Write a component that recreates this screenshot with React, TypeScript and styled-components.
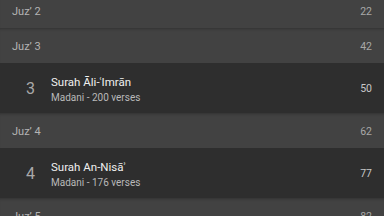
import React from "react";
import styled, { createGlobalStyle } from "styled-components";

const Global = createGlobalStyle`
  html, body { margin: 0; padding: 0; background: #2e2e2e; overflow: hidden; }
  body { font-family: Roboto, "Noto Sans", "Liberation Sans", sans-serif; }
`;

const List = styled.div`
  display: flex;
  flex-direction: column;
  margin-top: -7px;
  width: 384px;
`;

const JuzHeader = styled.div`
  display: flex;
  align-items: center;
  justify-content: space-between;
  height: 35px;
  padding: 1px 12px 0 12px;
  box-sizing: border-box;
  background: #424242;
  box-shadow: inset 0 3px 3px -2px rgba(0, 0, 0, 0.25);
`;

const JuzLabel = styled.span`
  font-size: 11px;
  color: #b4b4b4;
`;

const Page = styled.span<{ $bright?: boolean }>`
  font-size: 10.5px;
  color: ${(p) => (p.$bright ? "#c8c8c8" : "#a8a8a8")};
`;

const SurahRow = styled.div`
  display: flex;
  align-items: center;
  height: 50px;
  padding: 0 12px 0 0;
  box-sizing: border-box;
  background: #2e2e2e;
`;

const Num = styled.div`
  width: 51px;
  padding-left: 26px;
  box-sizing: border-box;
  font-size: 16px;
  color: #a9a9a9;
`;

const Info = styled.div`
  flex: 1;
  display: flex;
  flex-direction: column;
  gap: 3px;
`;

const Name = styled.span`
  font-size: 11.5px;
  color: #f0f0f0;
`;

const Sub = styled.span`
  font-size: 10px;
  color: #b9b9b9;
`;

type Item =
  | { kind: "juz"; label: string; page: number }
  | { kind: "surah"; n: number; name: string; sub: string; page: number };

const items: Item[] = [
  { kind: "juz", label: "Juz\u02BC 2", page: 22 },
  { kind: "juz", label: "Juz\u02BC 3", page: 42 },
  { kind: "surah", n: 3, name: "Surah \u0100li-\u02BFImr\u0101n", sub: "Madani - 200 verses", page: 50 },
  { kind: "juz", label: "Juz\u02BC 4", page: 62 },
  { kind: "surah", n: 4, name: "Surah An-Nis\u0101\u02BE", sub: "Madani - 176 verses", page: 77 },
  { kind: "juz", label: "Juz\u02BC 5", page: 82 },
];

export default function App() {
  return (
    <>
      <Global />
      <List>
        {items.map((it, i) =>
          it.kind === "juz" ? (
            <JuzHeader key={i}>
              <JuzLabel>{it.label}</JuzLabel>
              <Page>{it.page}</Page>
            </JuzHeader>
          ) : (
            <SurahRow key={i}>
              <Num>{it.n}</Num>
              <Info>
                <Name>{it.name}</Name>
                <Sub>{it.sub}</Sub>
              </Info>
              <Page $bright>{it.page}</Page>
            </SurahRow>
          )
        )}
      </List>
    </>
  );
}
